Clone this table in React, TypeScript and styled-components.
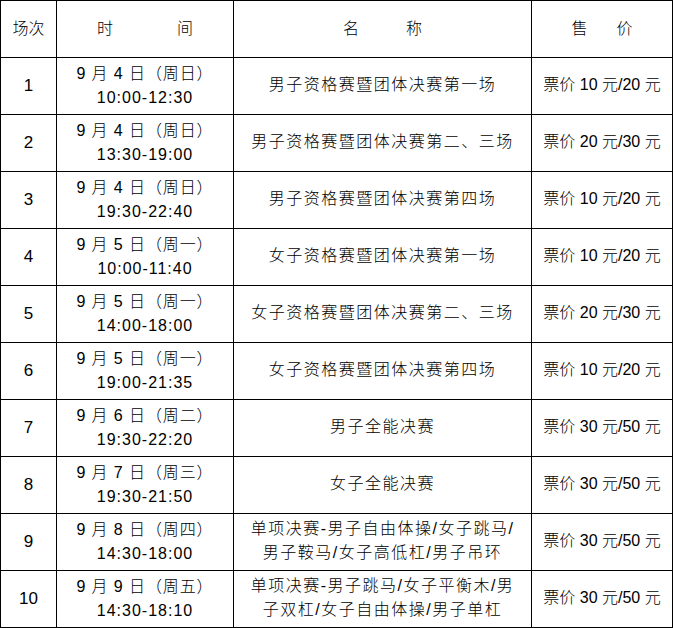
import React from 'react';
import styled, { createGlobalStyle } from 'styled-components';

const GlobalStyle = createGlobalStyle`
  html, body {
    margin: 0;
    padding: 0;
    background: #fff;
  }
  body {
    font-family: "Liberation Sans", "Noto Sans CJK SC", sans-serif;
    color: #000;
  }
`;

const Table = styled.div`
  display: grid;
  grid-template-columns: 56px 177px 298px 141px;
  grid-auto-rows: 57px;
  width: 673px;
  box-sizing: border-box;
  border-left: 1px solid #000;
  border-top: 1px solid #000;
`;

const Cell = styled.div`
  box-sizing: border-box;
  border-right: 1px solid #000;
  border-bottom: 1px solid #000;
  display: flex;
  flex-direction: column;
  align-items: center;
  justify-content: center;
  font-size: 16px;
  line-height: 24.5px;
  white-space: pre;
`;

const HeadCell = styled(Cell)<{ $gap: number }>`
  flex-direction: row;
  gap: ${(p) => p.$gap}px;
  font-weight: 300;
`;

const NumCell = styled(Cell)`
  font-size: 17px;
`;

const NameCell = styled(Cell)`
  letter-spacing: 1.5px;
  font-weight: 300;
  padding-bottom: 2px;
`;

const PriceCell = styled(Cell)`
  font-weight: 300;
  padding-bottom: 1px;
`;

const DateLine = styled.span`
  letter-spacing: 0.9px;
  font-weight: 300;
`;

const TimeLine = styled.span`
  letter-spacing: 1px;
`;

interface Session {
  no: number;
  date: string;
  time: string;
  name: string[];
  price: string;
}

const sessions: Session[] = [
  { no: 1, date: '9 月 4 日（周日）', time: '10:00-12:30', name: ['男子资格赛暨团体决赛第一场'], price: '票价 10 元/20 元' },
  { no: 2, date: '9 月 4 日（周日）', time: '13:30-19:00', name: ['男子资格赛暨团体决赛第二、三场'], price: '票价 20 元/30 元' },
  { no: 3, date: '9 月 4 日（周日）', time: '19:30-22:40', name: ['男子资格赛暨团体决赛第四场'], price: '票价 10 元/20 元' },
  { no: 4, date: '9 月 5 日（周一）', time: '10:00-11:40', name: ['女子资格赛暨团体决赛第一场'], price: '票价 10 元/20 元' },
  { no: 5, date: '9 月 5 日（周一）', time: '14:00-18:00', name: ['女子资格赛暨团体决赛第二、三场'], price: '票价 20 元/30 元' },
  { no: 6, date: '9 月 5 日（周一）', time: '19:00-21:35', name: ['女子资格赛暨团体决赛第四场'], price: '票价 10 元/20 元' },
  { no: 7, date: '9 月 6 日（周二）', time: '19:30-22:20', name: ['男子全能决赛'], price: '票价 30 元/50 元' },
  { no: 8, date: '9 月 7 日（周三）', time: '19:30-21:50', name: ['女子全能决赛'], price: '票价 30 元/50 元' },
  {
    no: 9,
    date: '9 月 8 日（周四）',
    time: '14:30-18:00',
    name: ['单项决赛-男子自由体操/女子跳马/', '男子鞍马/女子高低杠/男子吊环'],
    price: '票价 30 元/50 元',
  },
  {
    no: 10,
    date: '9 月 9 日（周五）',
    time: '14:30-18:10',
    name: ['单项决赛-男子跳马/女子平衡木/男', '子双杠/女子自由体操/男子单杠'],
    price: '票价 30 元/50 元',
  },
];

export default function App() {
  return (
    <>
      <GlobalStyle />
      <Table>
        <HeadCell $gap={0}>
          <span>场次</span>
        </HeadCell>
        <HeadCell $gap={64}>
          <span>时</span>
          <span>间</span>
        </HeadCell>
        <HeadCell $gap={47}>
          <span>名</span>
          <span>称</span>
        </HeadCell>
        <HeadCell $gap={29}>
          <span>售</span>
          <span>价</span>
        </HeadCell>

        {sessions.map((s) => (
          <React.Fragment key={s.no}>
            <NumCell>{s.no}</NumCell>
            <Cell>
              <DateLine>{s.date}</DateLine>
              <TimeLine>{s.time}</TimeLine>
            </Cell>
            <NameCell>
              {s.name.map((line) => (
                <span key={line}>{line}</span>
              ))}
            </NameCell>
            <PriceCell>{s.price}</PriceCell>
          </React.Fragment>
        ))}
      </Table>
    </>
  );
}
